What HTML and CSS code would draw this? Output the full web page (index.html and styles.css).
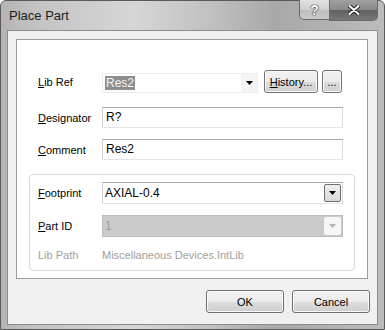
FILE: index.html
```html
<!DOCTYPE html>
<html lang="en">
<head>
    <meta charset="UTF-8">
    <title>Place Part</title>
    <link rel="stylesheet" href="styles.css">
</head>
<body>
    <div class="window">
        <div class="titlebar">
            <span class="title">Place Part</span>
            <div class="caption-btns">
                <div class="cap-btn help">?</div>
                <div class="cap-btn close">
                    <svg width="12" height="10" viewBox="0 0 12 10">
                        <path d="M1.5 1 L10.5 9 M10.5 1 L1.5 9" stroke="#222" stroke-width="4" stroke-linecap="round"/>
                        <path d="M1.5 1 L10.5 9 M10.5 1 L1.5 9" stroke="#fff" stroke-width="2" stroke-linecap="round"/>
                    </svg>
                </div>
            </div>
        </div>

        <div class="client">
            <div class="panel">
                <!-- library reference -->
                <div class="row first">
                    <label class="lbl"><u>L</u>ib Ref</label>
                    <div class="combo edit">
                        <span class="sel">Res2</span>
                        <span class="arrow">
                            <svg width="7" height="4" viewBox="0 0 7 4"><path d="M0 0 H7 L3.5 4 Z" fill="#000"/></svg>
                        </span>
                    </div>
                    <button class="btn hist"><u>H</u>istory...</button>
                    <button class="btn dots">...</button>
                </div>

                <div class="row">
                    <label class="lbl"><u>D</u>esignator</label>
                    <div class="field">R?</div>
                </div>

                <div class="row">
                    <label class="lbl"><u>C</u>omment</label>
                    <div class="field">Res2</div>
                </div>

                <div class="group">
                    <div class="row">
                        <label class="lbl"><u>F</u>ootprint</label>
                        <div class="combo drop">
                            <span class="val">AXIAL-0.4</span>
                            <span class="drop-btn">
                                <svg width="7" height="4" viewBox="0 0 7 4"><path d="M0 0 H7 L3.5 4 Z" fill="#000"/></svg>
                            </span>
                        </div>
                    </div>
                    <div class="row">
                        <label class="lbl"><u>P</u>art ID</label>
                        <div class="combo drop disabled">
                            <span class="val">1</span>
                            <span class="drop-btn">
                                <svg width="7" height="4" viewBox="0 0 7 4"><path d="M0 0 H7 L3.5 4 Z" fill="#b4b4b4"/></svg>
                            </span>
                        </div>
                    </div>
                    <div class="row path">
                        <label class="lbl">Lib Path</label>
                        <span class="path-text">Miscellaneous Devices.IntLib</span>
                    </div>
                </div>
            </div>

            <div class="actions">
                <button class="btn action">OK</button>
                <button class="btn action">Cancel</button>
            </div>
        </div>
    </div>
</body>
</html>
```

FILE: styles.css
```css
body {
    margin: 0;
    width: 385px;
    height: 330px;
    overflow: hidden;
    font-family: 'Liberation Sans', Arial, sans-serif;
    font-size: 11px;
    color: #000;
    background: #fff;
}

.window {
    box-sizing: border-box;
    width: 385px;
    height: 330px;
    display: flex;
    flex-direction: column;
    padding: 0 6px 4px 6px;
    border: 1px solid #5a5a5a;
    border-radius: 6px 6px 0 0;
    background: linear-gradient(to right, #b4b4b4 0%, #c4c4c4 10%, #d6d6d6 35%, #c0c0c0 55%, #a8a8a8 72%, #bcbcbc 100%);
}

.titlebar {
    flex-shrink: 0;
    height: 29px;
    display: flex;
    align-items: flex-start;
}

.title {
    margin: 7px 0 0 2px;
    font-size: 13px;
    color: #1c1c1c;
}

.caption-btns {
    margin-left: auto;
    margin-top: -1px;
    display: flex;
}

.cap-btn {
    height: 20px;
    display: flex;
    align-items: center;
    justify-content: center;
    border: 1px solid #6a6a6a;
    border-top: none;
    box-sizing: border-box;
}

.help {
    width: 30px;
    border-radius: 0 0 0 5px;
    border-right: none;
    background: linear-gradient(to bottom, #e2e2e2, #cfcfcf 50%, #bdbdbd 51%, #c8c8c8);
    font-size: 14px;
    font-weight: bold;
    color: #fff;
    text-shadow: 0 0 1px #222, 0 0 1px #222, 0 0 1px #222;
}

.close {
    width: 49px;
    height: 21px;
    border-radius: 0 0 5px 0;
    background: linear-gradient(to bottom, #a0a0a0, #8a8a8a 50%, #626262 51%, #777777);
}

.client {
    flex: 1;
    min-height: 0;
    display: flex;
    flex-direction: column;
    background: #f0f0f0;
    border: 1px solid #8c8c8c;
    padding: 8px 9px 0 8px;
}

.panel {
    flex-shrink: 0;
    box-sizing: border-box;
    height: 240px;
    background: #fff;
    border: 1px solid #9c9c9c;
    padding-top: 30px;
    display: flex;
    flex-direction: column;
}

.row {
    display: flex;
    align-items: center;
    padding: 0 24px 0 21px;
    margin-bottom: 11px;
}

.row.first {
    height: 23px;
    margin-bottom: 14px;
}

.lbl {
    width: 64px;
    flex-shrink: 0;
}

.field {
    flex: 1;
    height: 19px;
    line-height: 19px;
    padding-left: 3px;
    font-size: 12px;
    border: 1px solid;
    border-color: #a9a9a9 #dcdcdc #e4e4e4 #d2d2d2;
}

.combo {
    display: flex;
    align-items: center;
    box-sizing: border-box;
}

.combo.edit {
    width: 156px;
    height: 20px;
    align-self: flex-end;
    border: 1px solid #ececec;
    padding-left: 2px;
}

.sel {
    background: #8e8e8e;
    color: #f4f4f4;
    font-size: 12px;
    padding: 0 1px;
    line-height: 14px;
}

.arrow {
    margin-left: auto;
    width: 16px;
    height: 18px;
    display: flex;
    align-items: center;
    justify-content: center;
    background: #f4f4f4;
}

.btn {
    flex-shrink: 0;
    font-family: 'Liberation Sans', Arial, sans-serif;
    font-size: 11px;
    color: #000;
    height: 23px;
    padding: 0;
    border: 1px solid #707070;
    border-radius: 3px;
    background: linear-gradient(to bottom, #f2f2f2, #ebebeb 50%, #dddddd 51%, #cfcfcf);
    box-shadow: inset 0 0 0 1px #fafafa;
}

.hist {
    width: 54px;
    margin-left: 6px;
}

.dots {
    width: 20px;
    margin-left: 4px;
}

.group {
    margin: 3px 12px 0 12px;
    border: 1px solid #dadada;
    border-radius: 4px;
    padding: 7px 0 8px 0;
}

.group .row {
    padding: 0 11px 0 8px;
}

.combo.drop {
    flex: 1;
    height: 22px;
    border: 1px solid;
    border-color: #a9a9a9 #dcdcdc #e4e4e4 #d2d2d2;
    padding-left: 2px;
}

.val {
    font-size: 12px;
}

.drop-btn {
    margin-left: auto;
    width: 17px;
    height: 18px;
    margin-right: 1px;
    display: flex;
    align-items: center;
    justify-content: center;
    border: 1px solid #6e6e6e;
    border-radius: 2px;
    box-sizing: border-box;
    background: linear-gradient(to bottom, #f0f0f0, #d8d8d8);
}

.combo.disabled {
    background: #cbcbcb;
    border-color: #bcbcbc;
    color: #9e9e9e;
}

.combo.disabled .drop-btn {
    border: none;
    background: #f6f6f6;
}

.row.path {
    margin: 3px 0 0 0;
    height: 14px;
    color: #a0a0a0;
}

.path-text {
    font-size: 11px;
}

.actions {
    display: flex;
    justify-content: flex-end;
    gap: 8px;
    padding: 11px 0 0 0;
    margin-right: -2px;
}

.action {
    width: 78px;
}
```
